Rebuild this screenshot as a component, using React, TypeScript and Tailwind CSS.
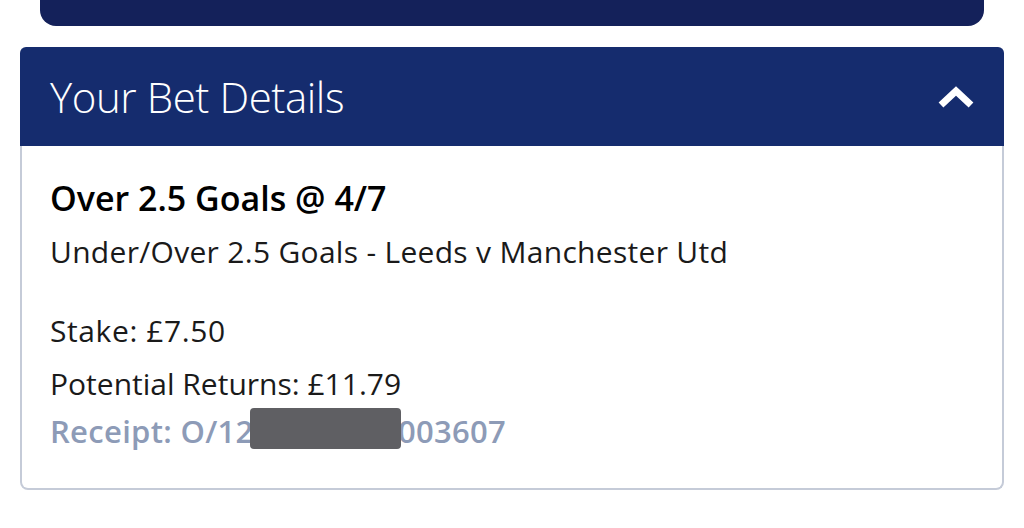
const sans = { fontFamily: '"Open Sans", "Noto Sans", sans-serif' };

function ChevronUp() {
  return (
    <svg width="40" height="28" viewBox="0 0 40 28" fill="none">
      <path d="M5 22 L20 8 L35 22" stroke="white" strokeWidth="7" strokeLinejoin="miter" strokeLinecap="butt" />
    </svg>
  );
}

export default function App() {
  return (
    <div className="w-[1024px] h-[528px] bg-white overflow-hidden" style={sans}>
      <div className="mx-[40px] h-[26px] rounded-b-[16px] bg-[#14215a]" />

      <section className="mx-[20px] mt-[21px]">
        <header className="h-[99px] bg-[#152c6e] rounded-t-[6px] flex items-center justify-between pl-[30px] pr-[28px]">
          <h2 className="text-white text-[42px] font-light tracking-[-0.01em]">Your Bet Details</h2>
          <ChevronUp />
        </header>

        <div className="border-x-2 border-b-2 border-[#c5cbd8] rounded-b-[8px] pl-[28px] pt-[33px] pb-[38px]">
          <p className="text-[34px] font-semibold text-black leading-[38px]">Over 2.5 Goals @ 4/7</p>
          <p className="text-[30px] text-[#1a1a1a] leading-[38px] mt-[16px] tracking-[0.01em]">
            Under/Over 2.5 Goals - Leeds v Manchester Utd
          </p>
          <p className="text-[30px] text-[#1a1a1a] leading-[38px] mt-[41px] tracking-[0.02em]">Stake: £7.50</p>
          <p className="text-[30px] text-[#1a1a1a] leading-[38px] mt-[15px]">Potential Returns: £11.79</p>
          <div className="relative mt-[9px] w-fit">
            <p className="text-[31px] font-semibold text-[#8d9bb7] leading-[38px] tracking-[0.01em]">Receipt: O/1250000000003607</p>
            <span className="absolute left-[200px] top-[-4px] w-[151px] h-[41px] rounded-[4px] bg-[#5f5f63]" />
          </div>
        </div>
      </section>
    </div>
  );
}
